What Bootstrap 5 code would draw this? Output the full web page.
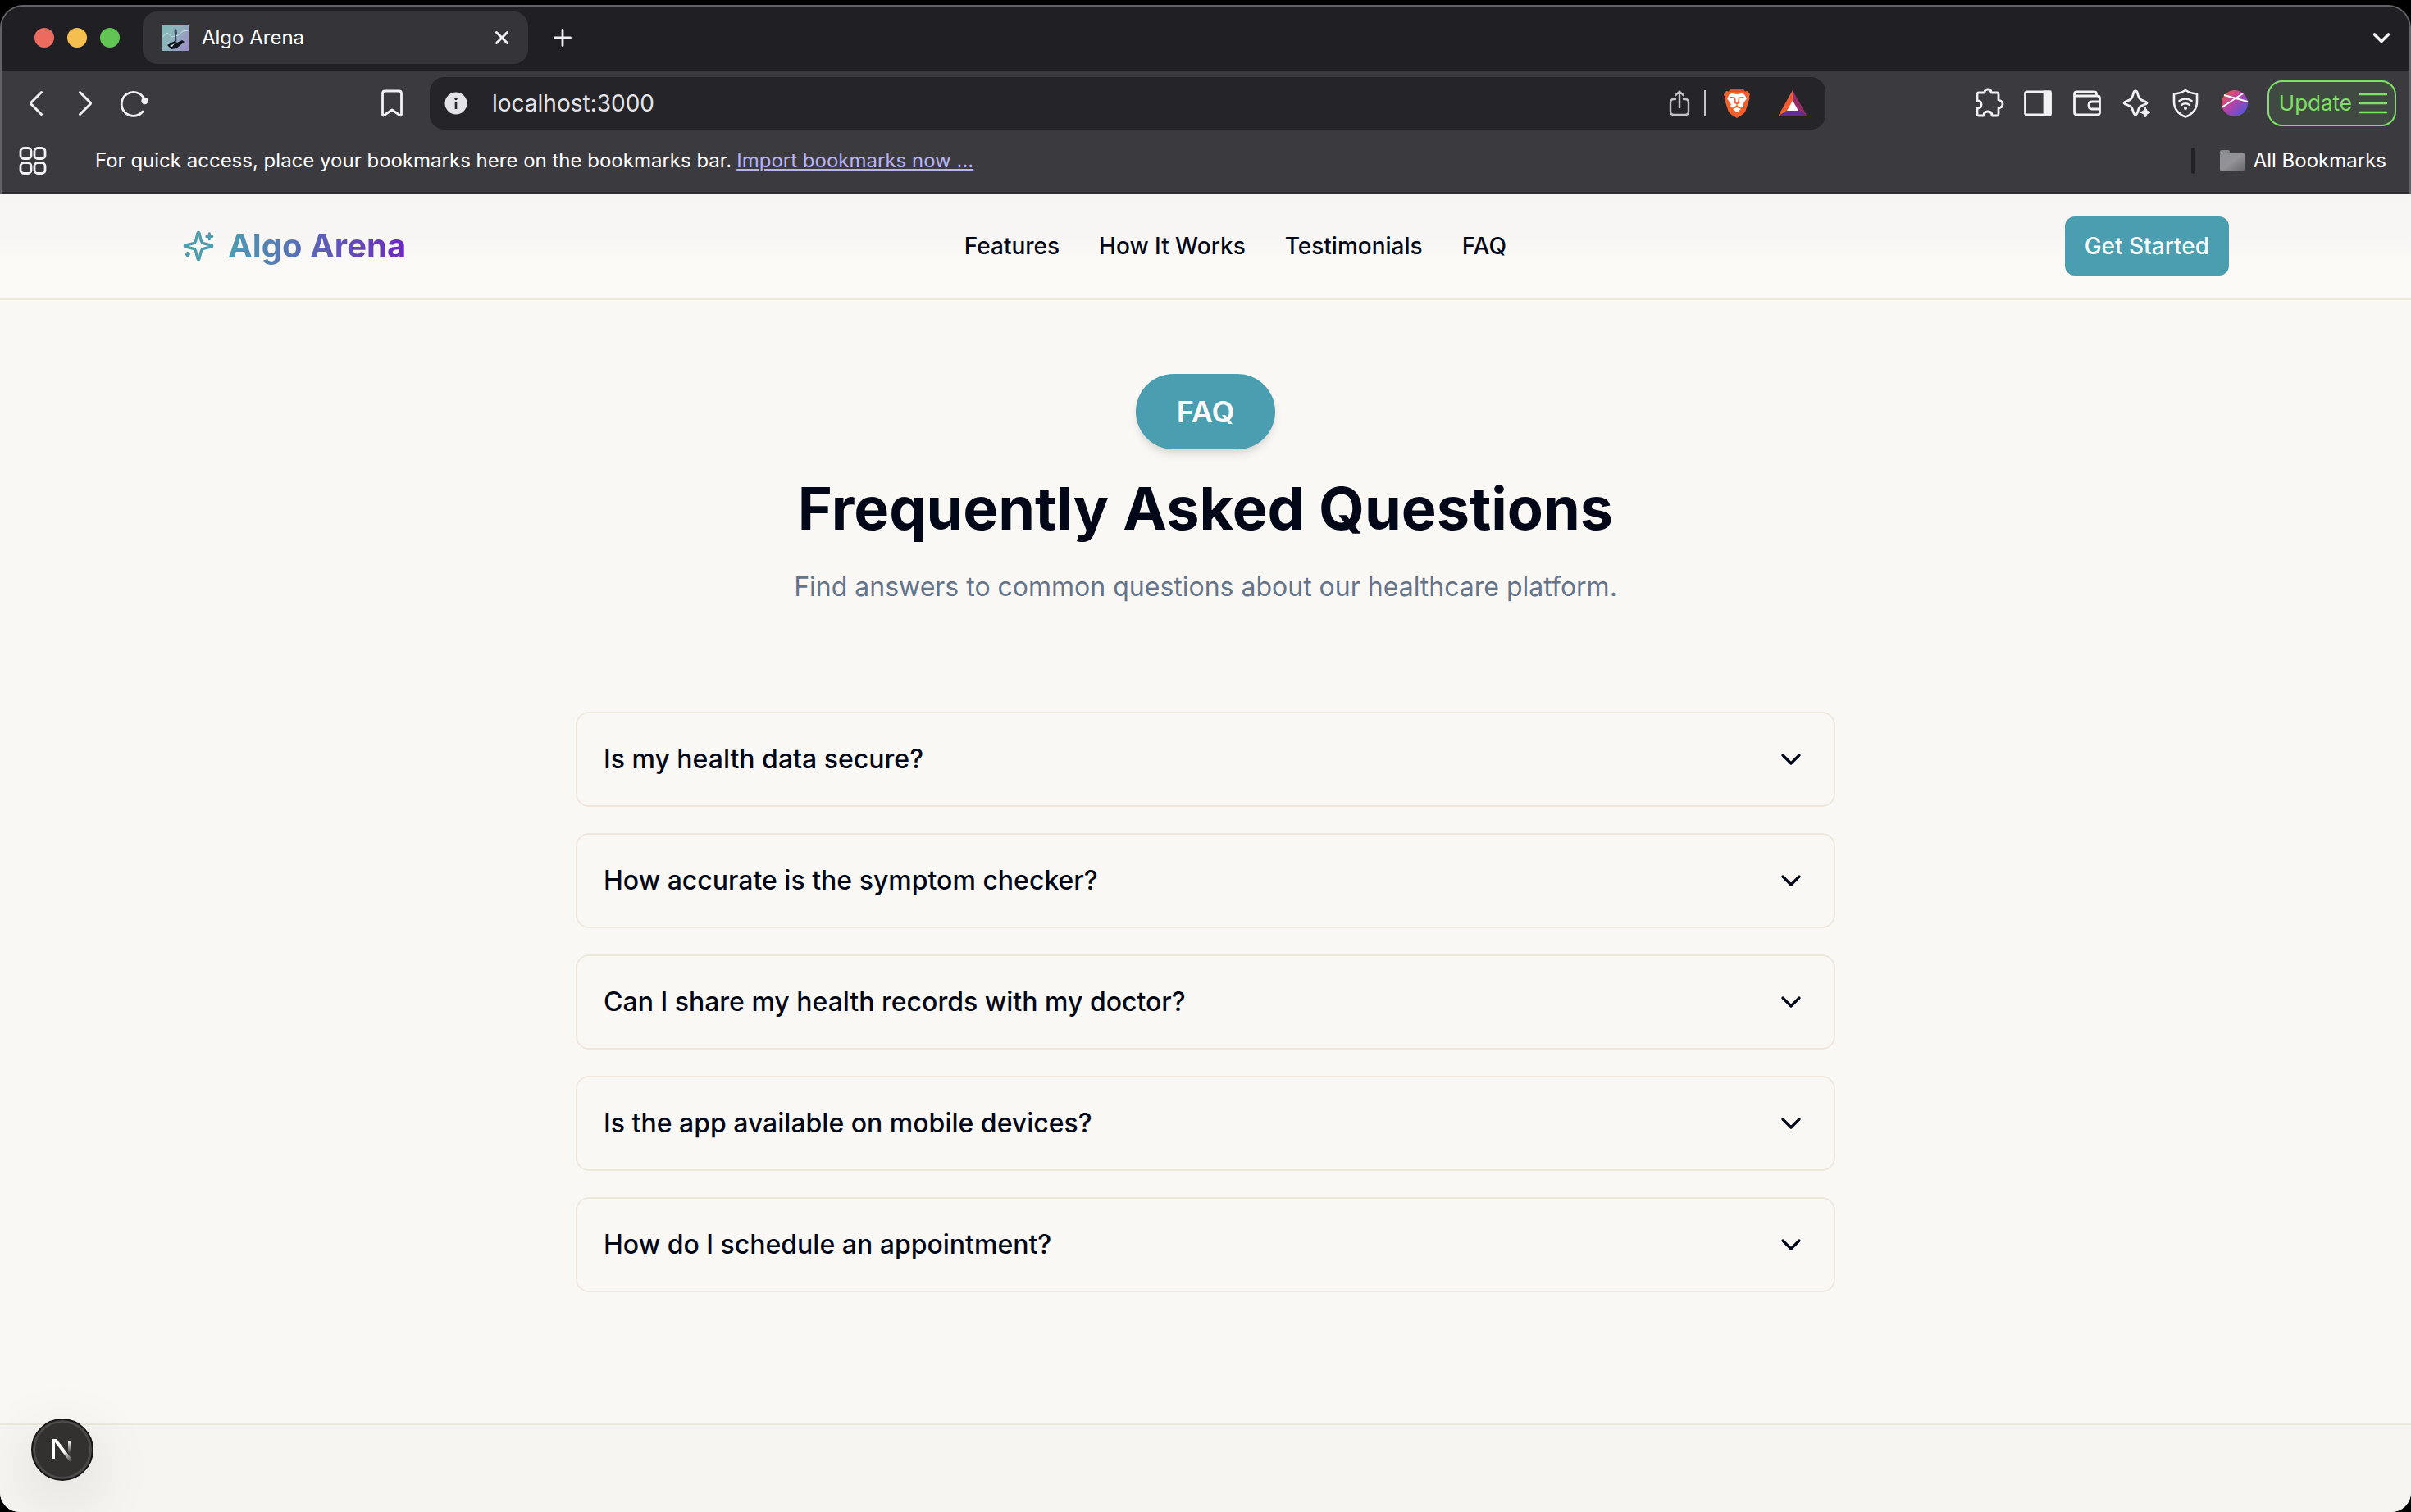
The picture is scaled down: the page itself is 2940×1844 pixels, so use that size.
<!DOCTYPE html>
<html lang="en">
<head>
<meta charset="utf-8">
<meta name="viewport" content="width=device-width, initial-scale=1">
<title>Algo Arena</title>
<link href="https://cdn.jsdelivr.net/npm/bootstrap@5.3.0/dist/css/bootstrap.min.css" rel="stylesheet">
<style>
  :root { --teal: #4b9db0; --ink: #020817; --paper: #faf8f5; --rule: #eee8df; --chrome: #3b3a3f; --strip: #201f24; }
  body { background: #000; font-family: Inter, "Liberation Sans", sans-serif; color: var(--ink); font-size: 28px; padding-top: 6px; }
  svg { display: block; flex: none; }
  button { font-family: inherit; }

  /* browser frame */
  .browser { border: 2px solid #626166; border-bottom: 0; border-radius: 28px 28px 0 0; overflow: hidden; color: #fff; background: var(--chrome); font-size: 24px; line-height: 32px; }
  .tabstrip { background: var(--strip); height: 78px; padding: 6px 22px 8px 40px; }
  .light { width: 24px; height: 24px; border-radius: 50%; }
  .light-red { background: #ed6a5e; } .light-amber { background: #f5bf4f; } .light-green { background: #61c554; }
  .lights { gap: 16px; margin-right: 28px; }
  .tab-card { width: 470px; height: 64px; background: #353439; border-radius: 18px; padding: 0 20px 0 24px; gap: 16px; }
  .ghost { background: none; border: 0; padding: 0; color: #f2f2f5; display: flex; }
  .ghost-tab { margin-left: 28px; }
  .toolbar { height: 80px; padding: 0 16px 0 24px; }
  .navset { gap: 20px; margin-right: 272px; }
  .address { width: 1702px; height: 64px; background: #252429; border-radius: 18px; padding: 0 22px 0 18px; margin-left: 26px; }
  .address input { background: none; border: 0; outline: 0; color: #e4e3e8; font-size: 28px; padding: 0; margin-left: 30px; }
  .address-rule { width: 2px; height: 32px; background: #c4c3c8; margin: 0 20px 0 16px; }
  .rewards { margin-left: 32px; }
  .tools { gap: 20px; }
  .update { height: 56px; border: 2px solid #7fdf66; border-radius: 18px; background: #404a42; color: #7fdf66; font-size: 26px; padding: 0 8px 0 12px; gap: 8px; }
  .bookmarks { height: 70px; padding: 0 28px 8px 20px; border-bottom: 2px solid #2f2b31; }
  .bookmarks a { color: #b9b3f5; margin-left: 6px; }
  .hint { margin-left: 58px; }
  .vbar { width: 4px; height: 32px; border-radius: 2px; background: #222126; margin-right: 30px; }
  .all-marks { gap: 10px; }

  /* site */
  .site { background: var(--paper); border-radius: 0 0 24px 24px; overflow: hidden; }
  .wrap { width: 100%; max-width: 2560px; margin: 0 auto; padding: 0 32px; }
  .topnav { border-bottom: 2px solid var(--rule); background: linear-gradient(#f6f5f3 0, #f7f6f4 40%, #fbf9f6 62%, #faf9f5); padding: 28px 0; }
  .logo { gap: 16px; font-size: 40px; line-height: 56px; font-weight: 700; color: var(--teal); text-decoration: none; }
  .logo span { background: linear-gradient(90deg, #4b9db0, #6d28c0); -webkit-background-clip: text; background-clip: text; color: transparent; }
  .links { gap: 48px; }
  .links a { color: var(--ink); font-weight: 500; text-decoration: none; }
  .cta { background: var(--teal); color: #f8fafc; font-size: 28px; line-height: 40px; font-weight: 500; border-radius: 12px; border: 0; padding: 16px 24px; }
  .cta:hover { background: #418a9b; color: #fff; }
  .faq { padding: 90px 0 160px; }
  .pill { background: var(--teal); color: #f8fafc; font-size: 36px; line-height: 60px; font-weight: 600; padding: 16px 50px; border-radius: 46px; box-shadow: 0 8px 12px -2px rgba(0,0,0,.1), 0 4px 8px -4px rgba(0,0,0,.1); }
  .faq h1 { font-size: 72px; line-height: 80px; font-weight: 700; margin: 32px 0 28px; }
  .sub { color: #64748b; font-size: 32px; line-height: 56px; margin: 0 0 124px; }
  .qa { width: 100%; max-width: 1536px; gap: 32px; --bs-accordion-bg: transparent; --bs-accordion-active-bg: transparent; --bs-accordion-active-color: var(--ink); --bs-accordion-btn-color: var(--ink); --bs-accordion-color: var(--ink); }
  .qa .accordion-item, .qa .accordion-item:not(:first-of-type) { border: 2px solid var(--rule); border-radius: 16px; }
  .qa .accordion-button { font-size: 32px; line-height: 48px; font-weight: 500; padding: 32px; justify-content: space-between; box-shadow: none; }
  .qa .accordion-button::after { display: none; }
  .foot { background: #f7f5f2; border-top: 2px solid #ece8dc; min-height: 108px; }
  .devtool { position: fixed; left: 38px; bottom: 38px; width: 76px; height: 76px; border-radius: 50%; border: 2px solid #161616; background: #32312f; box-shadow: inset 0 0 0 3px #4b4a49, 0 24px 80px rgba(0,0,0,.13); padding: 0; }
</style>
<script src="https://cdn.jsdelivr.net/npm/bootstrap@5.3.0/dist/js/bootstrap.bundle.min.js"></script>
</head>
<body class="d-flex flex-column min-vh-100">

<div class="browser">
  <div class="tabstrip d-flex align-items-center">
    <div class="lights d-flex"><span class="light light-red"></span><span class="light light-amber"></span><span class="light light-green"></span></div>
    <div class="tab-card d-flex align-items-center">
      <svg width="32" height="32" viewBox="0 0 32 32"><defs><linearGradient id="fav" x1="0" y1="0" x2="1" y2=".6"><stop offset="0" stop-color="#7fb9b4"/><stop offset=".5" stop-color="#8fb3bd"/><stop offset="1" stop-color="#9a94c4"/></linearGradient></defs><rect width="32" height="32" fill="url(#fav)"/><path d="M0 15 6 10l6 5 7-2 6-5 7-1" fill="none" stroke="#c9dfe2" stroke-width="1"/><path d="M16 5l1.500 1 .500 5-1 2 .500 7-1.500 1-1-7-.500-6z" fill="#34495c"/><path d="M6 25l9-5 3 2 6-3 3 2-10 8-6 1z" fill="#11151d"/><path d="M9 26l6-3-3 4z" fill="#cfd6e4"/></svg>
      <span class="flex-grow-1">Algo Arena</span>
      <button class="ghost" aria-label="Close tab"><svg width="24" height="24" viewBox="0 0 24 24" fill="none" stroke="currentColor" stroke-width="3" stroke-linecap="round"><path d="M5.500 5.500l13 13M18.500 5.500l-13 13"/></svg></button>
    </div>
    <button class="ghost ghost-tab" aria-label="New tab"><svg width="28" height="28" viewBox="0 0 28 28" fill="none" stroke="currentColor" stroke-width="2.800" stroke-linecap="round"><path d="M14 4.500v19M4.500 14h19"/></svg></button>
    <button class="ghost ms-auto" aria-label="Search tabs"><svg width="24" height="24" viewBox="0 0 24 24" fill="none" stroke="currentColor" stroke-width="3.600" stroke-linecap="round" stroke-linejoin="round"><path d="M3.500 8l8.500 8.500L20.500 8"/></svg></button>
  </div>

  <div class="toolbar d-flex align-items-center">
    <div class="navset d-flex">
      <button class="ghost" aria-label="Back"><svg width="40" height="40" viewBox="0 0 40 40" fill="none" stroke="currentColor" stroke-width="3" stroke-linecap="round" stroke-linejoin="round"><path d="M24.500 6.500 12 19q-1 1 0 2l12.500 12.500"/></svg></button>
      <button class="ghost" aria-label="Forward"><svg width="40" height="40" viewBox="0 0 40 40" fill="none" stroke="currentColor" stroke-width="3" stroke-linecap="round" stroke-linejoin="round"><path d="M11.500 6.500 24 19q1 1 0 2L11.500 33.500"/></svg></button>
      <button class="ghost" aria-label="Reload"><svg width="40" height="40" viewBox="0 0 40 40" fill="none" stroke="currentColor" stroke-width="2.800" stroke-linecap="round"><path d="M28 30A14.500 14.500 0 1 1 30 15"/><circle cx="30.500" cy="17" r="4.200" fill="currentColor" stroke="none"/></svg></button>
    </div>
    <button class="ghost" aria-label="Bookmark this page"><svg width="40" height="40" viewBox="0 0 40 40" fill="none" stroke="currentColor" stroke-width="2.800" stroke-linejoin="round"><path d="M8.500 8q0-3 3-3h17q3 0 3 3v25q0 3-2 1.500L20 28l-9.500 6.500q-2 1.500-2-1.500z"/></svg></button>
    <div class="address d-flex align-items-center">
      <svg width="28" height="28" viewBox="0 0 28 28"><circle cx="14" cy="14" r="13.500" fill="#e4e3e8"/><circle cx="14" cy="8.500" r="1.700" fill="#252429"/><path d="M14 13v8" stroke="#252429" stroke-width="2.600"/></svg>
      <input class="flex-grow-1" type="text" value="localhost:3000" aria-label="Address">
      <button class="ghost" aria-label="Share"><svg width="28" height="36" viewBox="0 0 28 36" fill="none" stroke="#c4c3c8" stroke-width="2.400" stroke-linecap="round" stroke-linejoin="round"><path d="M9 13H7q-4 0-4 4v11q0 4 4 4h14q4 0 4-4V17q0-4-4-4h-2M14 23V4M9 8.500 14 3.500l5 5"/></svg></button>
      <span class="address-rule"></span>
      <button class="ghost" aria-label="Brave Shields"><svg width="36" height="36" viewBox="0 0 36 36"><path d="M11 0h14l3 3.500 3-.5 3 4-1 3 .500 2-5 15.500Q28 30 18 36 8 30 7.500 27.500L2.500 12l.500-2-1-3 3-4 3 .500z" fill="#f0602b"/><path d="M11 0h14l3 4H8z" fill="#dc5228"/><path d="M12 6l6 1 6-1 3 1 3 5-2 3-3 4 1 3-4 2-4-2-4 2-4-2 1-3-3-4-2-3 3-5z" fill="#fff"/><path d="M9.500 10.500l6 1 .500 5M26.500 10.500l-6 1-.500 5M14.500 16.500l3.500 2 3.500-2M18 18.500v3l-5 3M18 21.500l5 3" fill="none" stroke="#f0602b" stroke-width="1.600"/><path d="M18 23l5 2-5 4-5-4z" fill="#fff"/></svg></button>
      <button class="ghost rewards" aria-label="Brave Rewards"><svg width="36" height="32" viewBox="0 0 36 32"><path d="M18 0v13L11 25 0 32z" fill="#f15a32"/><path d="M18 0l18 32-11-7-7-12z" fill="#932b66"/><path d="M0 32l11-7h14l11 7z" fill="#622e93"/><path d="M18 12.500 25 25H11z" fill="#fff"/></svg></button>
    </div>
    <div class="tools d-flex align-items-center ms-auto">
      <button class="ghost" aria-label="Extensions"><svg width="40" height="40" viewBox="0 0 40 40" fill="none" stroke="currentColor" stroke-width="2.800" stroke-linejoin="round"><path d="M6 9q0-2 2-2h7q0-4 4-4t4 4h7q2 0 2 2v7q5 1 5 5t-5 5v7q0 2-2 2h-6q0-5-5-5t-5 5H8q-2 0-2-2v-7q5 0 5-4.500T6 17z"/></svg></button>
      <button class="ghost" aria-label="Sidebar"><svg width="40" height="40" viewBox="0 0 40 40" fill="none" stroke="currentColor" stroke-width="2.800"><rect x="4.500" y="6" width="31" height="28" rx="2"/><path d="M28 6h7v28h-7z" fill="currentColor"/></svg></button>
      <button class="ghost" aria-label="Wallet"><svg width="40" height="40" viewBox="0 0 40 40" fill="none" stroke="currentColor" stroke-width="2.800" stroke-linejoin="round"><path d="M4.500 10v21q0 3 3 3h25q3 0 3-3V14q0-3-3-3h-28V9q0-3 3-3h21q3 0 3 3v2M35 18h-9q-4 0-4 4v1q0 4 4 4h9"/></svg></button>
      <button class="ghost" aria-label="Leo AI"><svg width="40" height="40" viewBox="0 0 40 40" fill="none" stroke="currentColor" stroke-width="2.800" stroke-linejoin="round"><path d="M19 5q2 0 2.500 3c1.500 6 2.500 7.500 8.500 9.500q6 2 0 4c-6 2-7 3.500-8.500 9.500q-2.500 6-5 0c-1.500-6-2.500-7.500-8.500-9.500q-6-2 0-4c6-2 7-3.500 8.500-9.500q.500-3 2.500-3z"/><path d="M31 25l2 4 4 2-4 2-2 4-2-4-4-2 4-2z" fill="currentColor" stroke-width="1"/></svg></button>
      <button class="ghost" aria-label="VPN"><svg width="40" height="40" viewBox="0 0 40 40" fill="none" stroke="currentColor" stroke-width="2.600" stroke-linecap="round" stroke-linejoin="round"><path d="M20 4q6 4 14 4.500V18q0 13-14 18.500Q6 31 6 18V8.500Q14 8 20 4z"/><path d="M12.500 17q7.500-5 15 0M15 22q5-3.500 10 0"/><circle cx="20" cy="26" r="2" fill="currentColor" stroke="none"/></svg></button>
      <button class="ghost" aria-label="Profile"><svg width="40" height="40" viewBox="0 0 40 40"><defs><linearGradient id="ava" x1="0" y1="0" x2="1" y2="1"><stop offset=".1" stop-color="#e8554e"/><stop offset=".45" stop-color="#b642a8"/><stop offset="1" stop-color="#3a5be0"/></linearGradient></defs><circle cx="20" cy="20" r="16" fill="url(#ava)"/><path d="M5 24.500 30 8M7 10l29 8" stroke="#fff" stroke-width="2"/></svg></button>
      <button class="update d-flex align-items-center">Update<svg width="36" height="28" viewBox="0 0 36 28" stroke="currentColor" stroke-width="2.400" stroke-linecap="round"><path d="M2 3h32M2 14h32M2 25h32"/></svg></button>
    </div>
  </div>

  <div class="bookmarks d-flex align-items-center">
    <button class="ghost" aria-label="Apps"><svg width="36" height="36" viewBox="0 0 36 36" fill="none" stroke="currentColor" stroke-width="2.800"><rect x="3" y="2.500" width="13" height="13" rx="4"/><rect x="20" y="2.500" width="13" height="13" rx="4"/><rect x="3" y="20.500" width="13" height="13" rx="4"/><rect x="20" y="20.500" width="13" height="13" rx="4"/></svg></button>
    <span class="hint">For quick access, place your bookmarks here on the bookmarks bar.</span>
    <a href="#">Import bookmarks now ...</a>
    <span class="vbar ms-auto"></span>
    <button class="ghost all-marks align-items-center text-white">
      <svg width="32" height="28" viewBox="0 0 32 28"><defs><linearGradient id="fold" x1="0" y1="0" x2="1" y2="1"><stop offset="0" stop-color="#8f9095"/><stop offset=".5" stop-color="#929297"/><stop offset="1" stop-color="#69696c"/></linearGradient></defs><path d="M1 3q0-2 2-2h8q2 0 2 3H1z" fill="#8b8a8d"/><rect x="1" y="4" width="30" height="23" rx="3" fill="url(#fold)"/></svg>
      All Bookmarks
    </button>
  </div>
</div>

<div class="site d-flex flex-column flex-grow-1">
  <header class="topnav">
    <div class="wrap d-flex align-items-center justify-content-between">
      <a class="logo d-flex align-items-center" href="#">
        <svg width="40" height="40" viewBox="0 0 24 24" fill="none" stroke="currentColor" stroke-width="2" stroke-linecap="round" stroke-linejoin="round"><path d="M9.937 15.500A2 2 0 0 0 8.500 14.063l-6.135-1.582a.5.5 0 0 1 0-.962L8.500 9.936A2 2 0 0 0 9.937 8.500l1.582-6.135a.5.5 0 0 1 .963 0L14.063 8.500A2 2 0 0 0 15.500 9.937l6.135 1.581a.5.5 0 0 1 0 .964L15.500 14.063a2 2 0 0 0-1.437 1.437l-1.582 6.135a.5.5 0 0 1-.963 0z"/><path d="M20 3v4M22 5h-4M4 17v2M5 18H3"/></svg>
        <span>Algo Arena</span>
      </a>
      <nav class="links d-flex">
        <a href="#">Features</a><a href="#">How It Works</a><a href="#">Testimonials</a><a href="#">FAQ</a>
      </nav>
      <button class="btn cta">Get Started</button>
    </div>
  </header>

  <main class="faq wrap d-flex flex-column align-items-center">
    <div class="pill">FAQ</div>
    <h1 class="text-center">Frequently Asked Questions</h1>
    <p class="sub text-center">Find answers to common questions about our healthcare platform.</p>
    <div class="accordion qa d-flex flex-column" id="faq">
      <div class="accordion-item"><h2 class="accordion-header"><button class="accordion-button collapsed" type="button" data-bs-toggle="collapse" data-bs-target="#a1" aria-expanded="false">Is my health data secure?<svg width="40" height="40" viewBox="0 0 24 24" fill="none" stroke="currentColor" stroke-width="2" stroke-linecap="round" stroke-linejoin="round"><path d="m6 9 6 6 6-6"/></svg></button></h2><div id="a1" class="accordion-collapse collapse" data-bs-parent="#faq"></div></div>
      <div class="accordion-item"><h2 class="accordion-header"><button class="accordion-button collapsed" type="button" data-bs-toggle="collapse" data-bs-target="#a2" aria-expanded="false">How accurate is the symptom checker?<svg width="40" height="40" viewBox="0 0 24 24" fill="none" stroke="currentColor" stroke-width="2" stroke-linecap="round" stroke-linejoin="round"><path d="m6 9 6 6 6-6"/></svg></button></h2><div id="a2" class="accordion-collapse collapse" data-bs-parent="#faq"></div></div>
      <div class="accordion-item"><h2 class="accordion-header"><button class="accordion-button collapsed" type="button" data-bs-toggle="collapse" data-bs-target="#a3" aria-expanded="false">Can I share my health records with my doctor?<svg width="40" height="40" viewBox="0 0 24 24" fill="none" stroke="currentColor" stroke-width="2" stroke-linecap="round" stroke-linejoin="round"><path d="m6 9 6 6 6-6"/></svg></button></h2><div id="a3" class="accordion-collapse collapse" data-bs-parent="#faq"></div></div>
      <div class="accordion-item"><h2 class="accordion-header"><button class="accordion-button collapsed" type="button" data-bs-toggle="collapse" data-bs-target="#a4" aria-expanded="false">Is the app available on mobile devices?<svg width="40" height="40" viewBox="0 0 24 24" fill="none" stroke="currentColor" stroke-width="2" stroke-linecap="round" stroke-linejoin="round"><path d="m6 9 6 6 6-6"/></svg></button></h2><div id="a4" class="accordion-collapse collapse" data-bs-parent="#faq"></div></div>
      <div class="accordion-item"><h2 class="accordion-header"><button class="accordion-button collapsed" type="button" data-bs-toggle="collapse" data-bs-target="#a5" aria-expanded="false">How do I schedule an appointment?<svg width="40" height="40" viewBox="0 0 24 24" fill="none" stroke="currentColor" stroke-width="2" stroke-linecap="round" stroke-linejoin="round"><path d="m6 9 6 6 6-6"/></svg></button></h2><div id="a5" class="accordion-collapse collapse" data-bs-parent="#faq"></div></div>
    </div>
  </main>

  <footer class="foot flex-grow-1"></footer>
</div>

<button class="devtool" aria-label="Open Next.js Dev Tools">
  <svg width="72" height="72" viewBox="0 0 72 72" fill="none"><defs><linearGradient id="na" gradientUnits="userSpaceOnUse" x1="38" y1="38" x2="48" y2="51"><stop stop-color="#fff"/><stop offset="1" stop-color="#fff" stop-opacity="0"/></linearGradient><linearGradient id="nb" gradientUnits="userSpaceOnUse" x1="46" y1="25" x2="46" y2="41"><stop stop-color="#fff"/><stop offset="1" stop-color="#fff" stop-opacity="0"/></linearGradient></defs><path d="M25 47V25h3l19 25" stroke="url(#na)" stroke-width="4"/><path d="M45 25v17" stroke="url(#nb)" stroke-width="4"/></svg>
</button>
</body>
</html>
